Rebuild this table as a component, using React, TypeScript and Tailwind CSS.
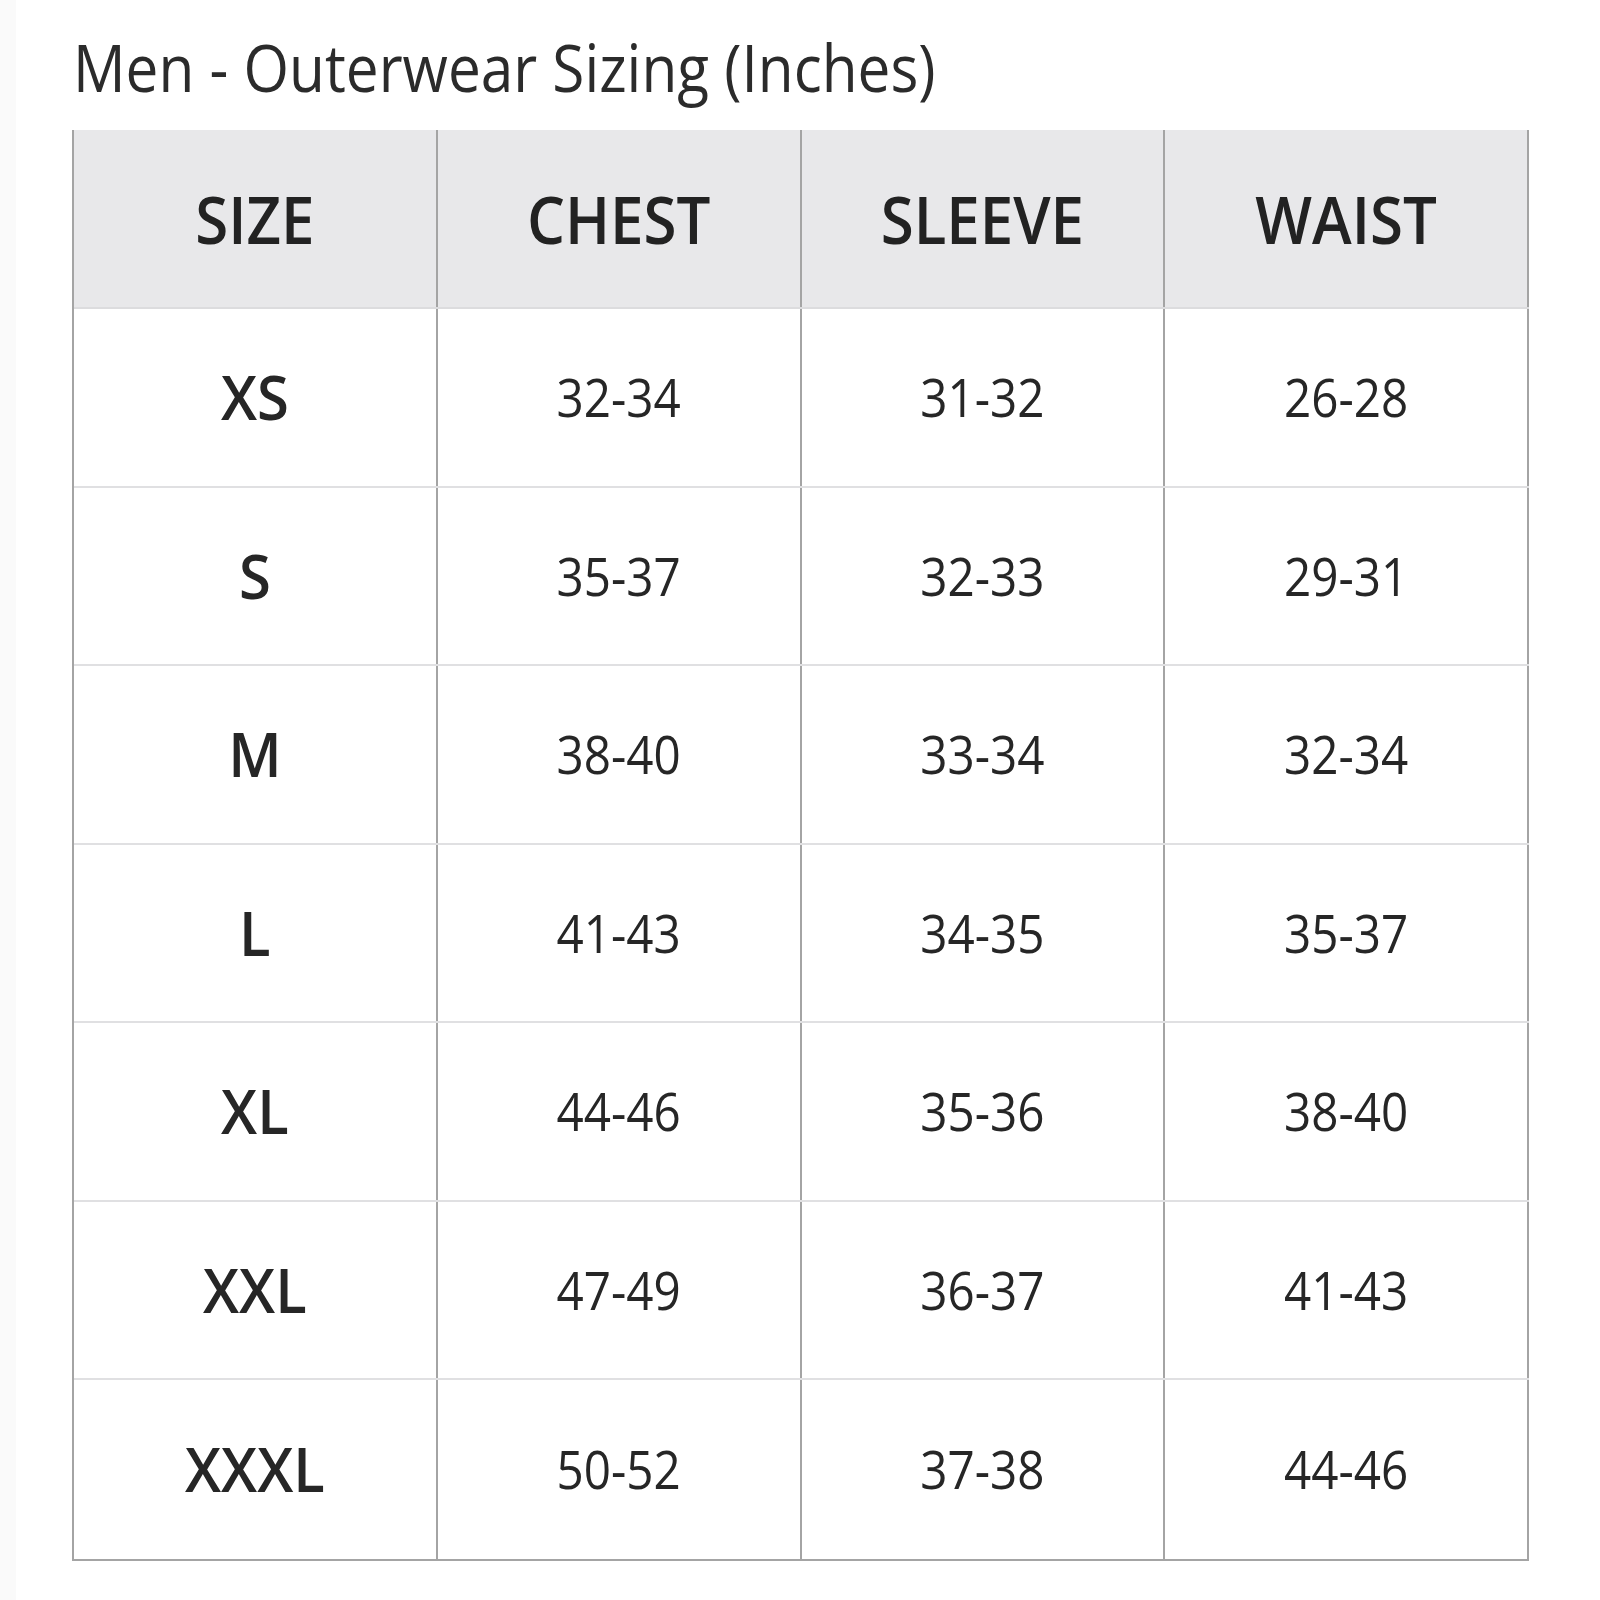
const headers = ["SIZE", "CHEST", "SLEEVE", "WAIST"];

const rows: [string, string, string, string][] = [
  ["XS", "32-34", "31-32", "26-28"],
  ["S", "35-37", "32-33", "29-31"],
  ["M", "38-40", "33-34", "32-34"],
  ["L", "41-43", "34-35", "35-37"],
  ["XL", "44-46", "35-36", "38-40"],
  ["XXL", "47-49", "36-37", "41-43"],
  ["XXXL", "50-52", "37-38", "44-46"],
];

export default function App() {
  return (
    <div className="flex h-[1600px] w-[1600px] bg-white font-['Open_Sans',sans-serif] text-[#262626]">
      {/* faint page edge */}
      <div className="w-[16px] bg-[#fafafa]" />
      <div className="flex flex-1 flex-col">
        <div className="h-[130px] pl-[57px] pt-[37px]">
          <span className="inline-block origin-center scale-y-[1.14] text-[58.5px] leading-none text-[#2b2b2b]">
            Men - Outerwear Sizing (Inches)
          </span>
        </div>

        <div className="ml-[56px] w-[1457px] border-b-2 border-l-2 border-[#a4a4a4]">
          {/* header */}
          <div className="grid h-[179px] grid-cols-4 border-b-2 border-[#dcdcde] bg-[#e8e8ea]">
            {headers.map((h) => (
              <div key={h} className="flex items-center justify-center border-r-2 border-[#a4a4a4]">
                <span className="inline-block scale-y-[1.09] text-[60px] font-semibold leading-none text-[#222]">
                  {h}
                </span>
              </div>
            ))}
          </div>

          {rows.map((r, i) => (
            <div
              key={r[0]}
              className={`grid h-[178.5px] grid-cols-4 ${i < rows.length - 1 ? "border-b-2 border-[#e0e0e2]" : ""}`}
            >
              {r.map((v, j) => (
                <div key={j} className="flex items-center justify-center border-r-2 border-[#a4a4a4]">
                  <span
                    className={`inline-block leading-none text-[#262626] ${
                      j === 0 ? "scale-y-[1.05] text-[58px] font-semibold" : "scale-y-[1.13] text-[47.6px]"
                    }`}
                  >
                    {v}
                  </span>
                </div>
              ))}
            </div>
          ))}
        </div>
      </div>
    </div>
  );
}
